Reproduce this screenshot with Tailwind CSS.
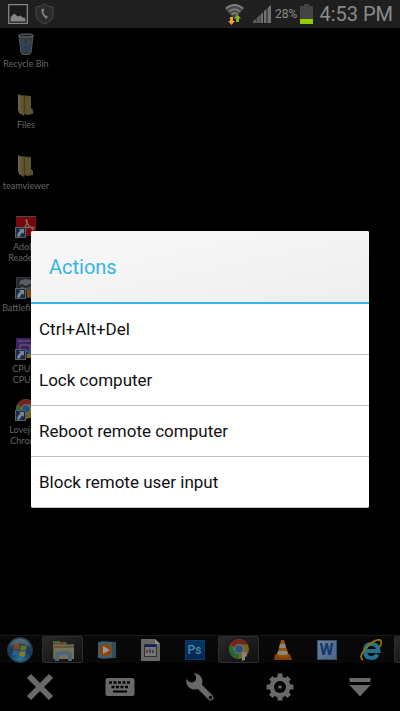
<!DOCTYPE html>
<html lang="en">
  <head>
    <meta charset="UTF-8" />
    <meta name="viewport" content="width=device-width, initial-scale=1.0" />
    <title>Remote Desktop</title>
    <script src="https://cdn.jsdelivr.net/npm/@tailwindcss/browser@4"></script>
  </head>
  <body class="relative flex flex-col min-h-screen overflow-hidden bg-black font-['Roboto',sans-serif]">
    <!-- Shared pieces -->
    <svg class="absolute w-0 h-0" aria-hidden="true">
      <defs>
        <linearGradient id="folder" x1="0" x2="1"><stop offset="0" stop-color="#6b6442" /><stop offset="1" stop-color="#574d2a" /></linearGradient>
        <radialGradient id="orb" cx=".5" cy=".85" r=".8"><stop offset="0" stop-color="#2c7896" /><stop offset=".55" stop-color="#123a5c" /><stop offset="1" stop-color="#3c4e5b" /></radialGradient>
        <symbol id="shortcut" viewBox="0 0 11 11">
          <path fill="#5d5f62" d="M0 0h11v11H0z" />
          <path fill="#142d4e" d="M1 1h9v9H1z" />
          <path fill="#7d8790" d="M4 2h5v5L7.500 5.500Q5 7 5 9.500H2Q2 6 5.500 3.500z" />
        </symbol>
        <symbol id="folder-icon" viewBox="0 0 22 22">
          <path fill="#4c4428" d="M6 1l10 1v13l1 1v3l-9 1z" />
          <path fill="url(#folder)" d="M3 0l6 3v19l-5-3-1-3z" />
          <path fill="#5c532f" d="M9 3l7-1v12l2 2v4l-6 1-3-2z" />
          <path fill="#463d20" d="M9 3l1 .5V20l-1 2z" />
        </symbol>
        <symbol id="chrome" viewBox="0 0 20 20">
          <circle cx="10" cy="10" r="10" fill="#78651d" />
          <path fill="#762320" d="M1.300 5A10 10 0 0 1 18.700 5.500H10A4.500 4.500 0 0 0 5.700 9z" />
          <path fill="#2b6435" d="M1.300 5l4.400 6.500A4.500 4.500 0 0 0 11 14.300L9 20A10 10 0 0 1 1.300 5z" />
          <circle cx="10" cy="10" r="4.800" fill="#77797b" />
          <circle cx="10" cy="10" r="3.800" fill="#27507a" />
        </symbol>
      </defs>
    </svg>

    <header class="flex items-center justify-between h-7 shrink-0 pl-2 pr-[7px] bg-[#1f1f1f] text-[#8b8b8b]">
      <div class="flex items-center gap-[7px]">
        <svg width="20" height="20" viewBox="0 0 20 20" role="img" aria-label="Screenshot saved">
          <path fill="#1b1b1b" stroke="#858585" stroke-width="1.300" d="M.7.700h18.600v18.600H.700z" />
          <path fill="#858585" d="M2.500 17.500v-4l2-2.500 2-1.500 2 2 2 1 2-1 2 2h2l1 2v2z" />
        </svg>
        <svg width="19" height="22" viewBox="0 0 19 22" role="img" aria-label="Call protection">
          <path fill="#2b2b2b" stroke="#4a4a4a" d="M9.500 1Q13 4 18 4v7q0 7-8.500 10Q1 18 1 11V4q5 0 8.500-3z" />
          <path fill="none" stroke="#858585" stroke-width="1.800" d="M7.500 6q-1 5 4 9" />
          <path stroke="#858585" stroke-width="2.200" d="M7 6.500l2 1M10.500 15l1.500-2" />
        </svg>
      </div>
      <div class="flex items-center">
        <svg class="mr-2" width="20" height="22" viewBox="0 0 20 22" role="img" aria-label="Wi-Fi">
          <path fill="#484848" d="M0 5.500Q9.500-3 19 5.500L9.500 16z" />
          <g fill="none" stroke="#7c7c7c" stroke-width="2">
            <path d="M1 5.500Q9.500-1.500 18 5.500" />
            <path d="M4 8.500Q9.500 4 15 8.500" />
            <path d="M6.500 11.300Q9.500 9 12.500 11.300" />
          </g>
          <path fill="#f39b36" d="M5 14h3v4h2l-3.500 4L3 18h2z" />
          <path fill="#82b51a" d="M11 19v-3.500H9l3.500-4 3.500 4h-2V19z" />
        </svg>
        <svg class="mr-1" width="18" height="18" viewBox="0 0 18 18" role="img" aria-label="Signal">
          <path fill="#5c5c5c" d="M0 18v-2l3-2v4zM3.500 18v-5L7 10v8z" />
          <path fill="#717171" d="M7.500 18V9.500L10 7.500V18zM11 18V6l2.500-2v14zM14.500 18V3L18 0v18z" />
        </svg>
        <span class="mr-[3px] text-xs">28%</span>
        <svg class="mr-[6px]" width="13" height="20" viewBox="0 0 13 20" role="img" aria-label="Battery">
          <path fill="#444" d="M4 0h5v2h4v13H0V2h4z" />
          <path fill="#8fce00" d="M0 15h13v5H0z" />
        </svg>
        <time class="text-xl leading-7">4:53 PM</time>
      </div>
    </header>

    <main class="flex-1 pt-[5px]">
      <ul class="w-[52px] text-center text-[9px] leading-[11px] text-[#666] font-['Lato',sans-serif] whitespace-nowrap">
        <li class="flex flex-col items-center h-[61px] gap-[3px]">
          <svg class="shrink-0" width="22" height="22" viewBox="0 0 22 22" aria-hidden="true">
            <path fill="#34383b" stroke="#53585a" d="M4 2.500h14L16 20l-2 1.500H8L6 20z" />
            <path fill="#202426" stroke="#656a6c" d="M3.500 2.500L7 1h9l2.500 1.500L16 4H6z" />
            <path stroke="#4a4f52" d="M8 6l1 13M14 6l-1 13M5 9l11 5M16 8L6 15" />
            <path fill="none" stroke="#1d426f" stroke-width="2" d="M8 11l2-2 2 2M13 12l1 3-3 1M8 13l0 3h2" />
          </svg>
          <span>Recycle Bin</span>
        </li>
        <li class="flex flex-col items-center h-[61px] gap-[3px]">
          <svg class="shrink-0" width="22" height="22" aria-hidden="true"><use href="#folder-icon" /></svg>
          <span>Files</span>
        </li>
        <li class="flex flex-col items-center h-[61px] gap-[3px]">
          <svg class="shrink-0" width="22" height="22" aria-hidden="true"><use href="#folder-icon" /></svg>
          <span>teamviewer</span>
        </li>
        <li class="flex flex-col items-center h-[61px] gap-[3px]">
          <svg class="shrink-0" width="22" height="22" viewBox="0 0 22 22" aria-hidden="true">
            <path fill="#74080a" d="M1 0h20v20H1z" />
            <path fill="#4f4444" d="M1 0h20v1H1z" />
            <path fill="none" stroke="#8a6b6b" stroke-width="1.200" d="M11 3q0 6 8 11M12 4q1 5-5 10M8 13q5-3 12-1" />
            <use href="#shortcut" y="11" width="11" height="11" />
          </svg>
          <span>Adobe<br />Reader X</span>
        </li>
        <li class="flex flex-col items-center h-[61px] gap-[3px]">
          <svg class="shrink-0" width="22" height="22" viewBox="0 0 22 22" aria-hidden="true">
            <path fill="#20262c" stroke="#34383c" d="M1.500.500h19v20h-19z" />
            <path fill="#5b6064" d="M4 8q0-6 7-6t7 6l-3-1-4 2-4-2z" />
            <path fill="#4c5154" d="M6 9l5 2 5-2v4H6z" />
            <path fill="#8a4b12" d="M12 13h3l2 3 3-3v7h-8z" />
            <use href="#shortcut" y="11" width="11" height="11" />
          </svg>
          <span>Battlefield 3</span>
        </li>
        <li class="flex flex-col items-center h-[61px] gap-[3px]">
          <svg class="shrink-0" width="22" height="22" viewBox="0 0 22 22" aria-hidden="true">
            <path fill="#3d2362" d="M1 0h20v20H1z" />
            <path fill="none" stroke="#756a83" d="M3 3h17M5 7h10v6H5z" />
            <path fill="#205a86" d="M13 12h6v4h-6z" />
            <path fill="#80701b" d="M12 16h5v4h-5z" />
            <use href="#shortcut" y="11" width="11" height="11" />
          </svg>
          <span>CPUID<br />CPU-Z</span>
        </li>
        <li class="flex flex-col items-center h-[61px] gap-[3px]">
          <svg class="shrink-0" width="22" height="22" viewBox="0 0 22 22" aria-hidden="true">
            <use href="#chrome" x="1" width="20" height="20" />
            <use href="#shortcut" y="11" width="11" height="11" />
          </svg>
          <span>Lovejeet<br />Chrome</span>
        </li>
      </ul>
    </main>

    <!-- Windows taskbar -->
    <nav class="flex items-center h-[28px] shrink-0 gap-[3px] overflow-hidden border-t border-[#191919] bg-[#070807]" aria-label="Taskbar">
      <button type="button" class="flex justify-center w-[39px] shrink-0" aria-label="Start">
        <svg width="26" height="26" viewBox="0 0 26 26">
          <circle cx="13" cy="13" r="12.500" fill="url(#orb)" stroke="#263746" />
          <path fill="#85451f" d="M7 8q3-2 6-.500l-1 5q-3-1-6 .500z" />
          <path fill="#5c7526" d="M14 8q3 1.500 6 0l-1 5q-3 1.500-6-.500z" />
          <path fill="#2b6088" d="M5.700 14q3-1.500 6-.500l-1 5q-3-1-6 .500z" />
          <path fill="#8a7928" d="M12.800 14q3 1.500 6 0l-1 5q-3 1.500-6-.500z" />
          <path fill="#a8bcc4" opacity=".25" d="M3 9Q6 2 13 2t10 7Q13 4 3 9z" />
        </svg>
      </button>
      <button type="button" class="flex items-center justify-center w-[41px] h-[27px] shrink-0 border border-[#2c2c2c] rounded-xs bg-linear-to-br from-[#292929] to-[#101010]" aria-label="Explorer">
        <svg width="24" height="24" viewBox="0 0 24 24">
          <path fill="#625a36" d="M2 5V3h6l1 1h6l1 2h7v15H2z" />
          <path fill="#787153" d="M2 7h20v1H2zM3 10h20v11H3z" />
          <path stroke="#2e7141" stroke-width="1.500" d="M4 4h3" />
          <path stroke="#783c27" stroke-width="1.500" d="M9 5h4" />
          <path stroke="#315c80" stroke-width="1.500" d="M16 7h4" />
          <path fill="none" stroke="#48687a" stroke-width="4" d="M6 23v-6q0-2 3-2h7q3 0 3 2v6" />
        </svg>
      </button>
      <button type="button" class="flex items-center justify-center w-[41px] shrink-0" aria-label="Media Player">
        <svg width="20" height="20" viewBox="0 0 20 20">
          <path fill="#2e4e5c" d="M4 1l15 1v16L4 19z" />
          <path fill="#38606f" d="M1 2h14v16H1z" />
          <circle cx="8.500" cy="10" r="6.500" fill="#8c4313" />
          <path fill="#989594" d="M6 6v8l7-4z" />
        </svg>
      </button>
      <button type="button" class="flex items-center justify-center w-[41px] shrink-0" aria-label="Document">
        <svg width="19" height="22" viewBox="0 0 19 22">
          <path fill="#686868" d="M0 0h14l5 5v17H0z" />
          <path fill="#929292" d="M14 0v5h5z" />
          <path fill="#777" stroke="#303030" d="M3.500 5.500h12v12h-12z" />
          <path fill="#171f62" d="M4 6h11v2H4z" />
          <path stroke="#803039" stroke-width="2" d="M6 11v3" />
          <path stroke="#275e44" stroke-width="2" d="M9 10v4" />
          <path stroke="#57306f" stroke-width="2" d="M12 11v3" />
        </svg>
      </button>
      <button type="button" class="flex items-center justify-center w-[41px] shrink-0" aria-label="Photoshop">
        <span class="flex items-center justify-center w-5 h-5 bg-linear-to-b from-[#063665] to-[#052650] border border-[#0a3d6d] text-xs font-medium text-[#4e8ba5]">Ps</span>
      </button>
      <button type="button" class="flex items-center justify-center w-[41px] h-[27px] shrink-0 border border-[#2c2c2c] rounded-xs bg-linear-to-br from-[#292929] to-[#101010]" aria-label="Chrome">
        <svg width="22" height="22" viewBox="0 0 22 22">
          <use href="#chrome" x="1" width="20" height="20" />
          <path fill="#858585" d="M14 14q2-2 4 0l1 3-2 1v3l-3 1v-4z" />
        </svg>
      </button>
      <button type="button" class="flex items-center justify-center w-[41px] shrink-0" aria-label="VLC">
        <svg width="20" height="22" viewBox="0 0 20 22">
          <path fill="#7c4209" d="M2 15h15l2 6H1z" />
          <path fill="#95500a" d="M8 1h3l5 16q-6 3-12 0z" />
          <path fill="#8b8783" d="M7 5h5l1 4H6zM5 12h9l1 3q-5 2-11 0z" />
        </svg>
      </button>
      <button type="button" class="flex items-center justify-center w-[41px] shrink-0" aria-label="Word">
        <span class="flex items-center justify-center w-5 h-5 border border-[#315179] bg-linear-to-br from-[#738292] to-[#4b6485] text-base font-bold leading-none text-[#123875]">W</span>
      </button>
      <button type="button" class="flex items-center justify-center w-[41px] shrink-0" aria-label="Internet Explorer">
        <svg width="22" height="22" viewBox="0 0 22 22">
          <path fill="none" stroke="#27708d" stroke-width="4" d="M5 12h13.500Q18 5 11.500 5T5 12t6.500 7q4 0 6-3.500" />
          <path fill="none" stroke="#93720c" stroke-width="1.800" d="M3 21q-5-3 3-12T20 1q3 2-.500 7" />
        </svg>
      </button>
      <button type="button" class="w-[41px] h-[27px] shrink-0 border border-[#2c2c2c] rounded-xs bg-linear-to-br from-[#292929] to-[#101010]" aria-label="Next window"></button>
    </nav>

    <!-- Session toolbar -->
    <nav class="grid grid-cols-5 h-12 shrink-0 text-[#696969]" aria-label="Session">
      <button type="button" class="flex items-center justify-center" aria-label="Close">
        <svg width="28" height="28" viewBox="0 0 28 28"><path stroke="currentColor" stroke-width="6" d="M3 3l22 22M25 3L3 25" /></svg>
      </button>
      <button type="button" class="flex items-center justify-center" aria-label="Keyboard">
        <svg width="30" height="20" viewBox="0 0 30 20">
          <rect x=".5" y="1" width="29" height="18" rx="2" fill="currentColor" />
          <path stroke="#000" stroke-width="2.500" d="M4 5.500h3M8.500 5.500h3M13 5.500h3M17.500 5.500h3M22 5.500h3M6.500 10h3M11 10h3M15.500 10h3M20 10h3" />
          <path stroke="#000" stroke-width="2" d="M8 14.500h14" />
        </svg>
      </button>
      <button type="button" class="flex items-center justify-center" aria-label="Tools">
        <svg width="30" height="30" viewBox="0 0 30 30">
          <path stroke="currentColor" stroke-width="6" stroke-linecap="round" d="M13 13l12.500 12.500" />
          <path fill="currentColor" d="M1.500 6.500C0 12 4 17.500 9.500 17.500 14 17.500 17.500 14 17.500 9.500 17.500 5 14 1.500 8.500 1.200 11 3 11.500 5 11 7.500 10 10.500 6.500 11 4.500 10 3 9 2 8 1.500 6.500z" />
          <circle cx="25.500" cy="25.500" r="1.800" fill="#000" />
        </svg>
      </button>
      <button type="button" class="flex items-center justify-center" aria-label="Settings">
        <svg width="28" height="28" viewBox="0 0 28 28">
          <g stroke="currentColor" stroke-width="5">
            <path d="M14 .500v27M.500 14h27" />
            <path d="M4.800 4.800l18.400 18.400M23.200 4.800L4.800 23.200" />
          </g>
          <circle cx="14" cy="14" r="10.500" fill="currentColor" />
          <circle cx="14" cy="14" r="6" fill="#000" />
          <circle cx="14" cy="14" r="1.800" fill="currentColor" />
        </svg>
      </button>
      <button type="button" class="flex items-center justify-center" aria-label="Hide toolbar">
        <svg width="22" height="20" viewBox="0 0 22 20"><path fill="currentColor" d="M.5 1h21v4H.500zM.5 8h21L11 19.500z" /></svg>
      </button>
    </nav>

    <!-- Actions dialog -->
    <div class="absolute inset-x-0 bottom-0 top-7 flex items-center px-[31px]">
      <section role="dialog" aria-labelledby="dialogTitle" class="w-full overflow-hidden bg-white rounded-xs shadow-lg">
        <h1 id="dialogTitle" class="h-[73px] px-[18px] border-b-2 border-[#33b5e5] bg-linear-to-br from-[#f6f6f6] from-30% to-[#eee] text-xl leading-[72px] text-[#33b5e5]">Actions</h1>
        <ul class="text-[17px] text-[#111]">
          <li class="border-b border-[#c2c2c2]"><button type="button" class="w-full h-[50px] px-2 pt-[2px] text-left">Ctrl+Alt+Del</button></li>
          <li class="border-b border-[#c2c2c2]"><button type="button" class="w-full h-[50px] px-2 pt-[2px] text-left">Lock computer</button></li>
          <li class="border-b border-[#c2c2c2]"><button type="button" class="w-full h-[50px] px-2 pt-[2px] text-left">Reboot remote computer</button></li>
          <li class="border-b border-[#c2c2c2]"><button type="button" class="w-full h-[50px] px-2 pt-[2px] text-left">Block remote user input</button></li>
        </ul>
      </section>
    </div>
  </body>
</html>
